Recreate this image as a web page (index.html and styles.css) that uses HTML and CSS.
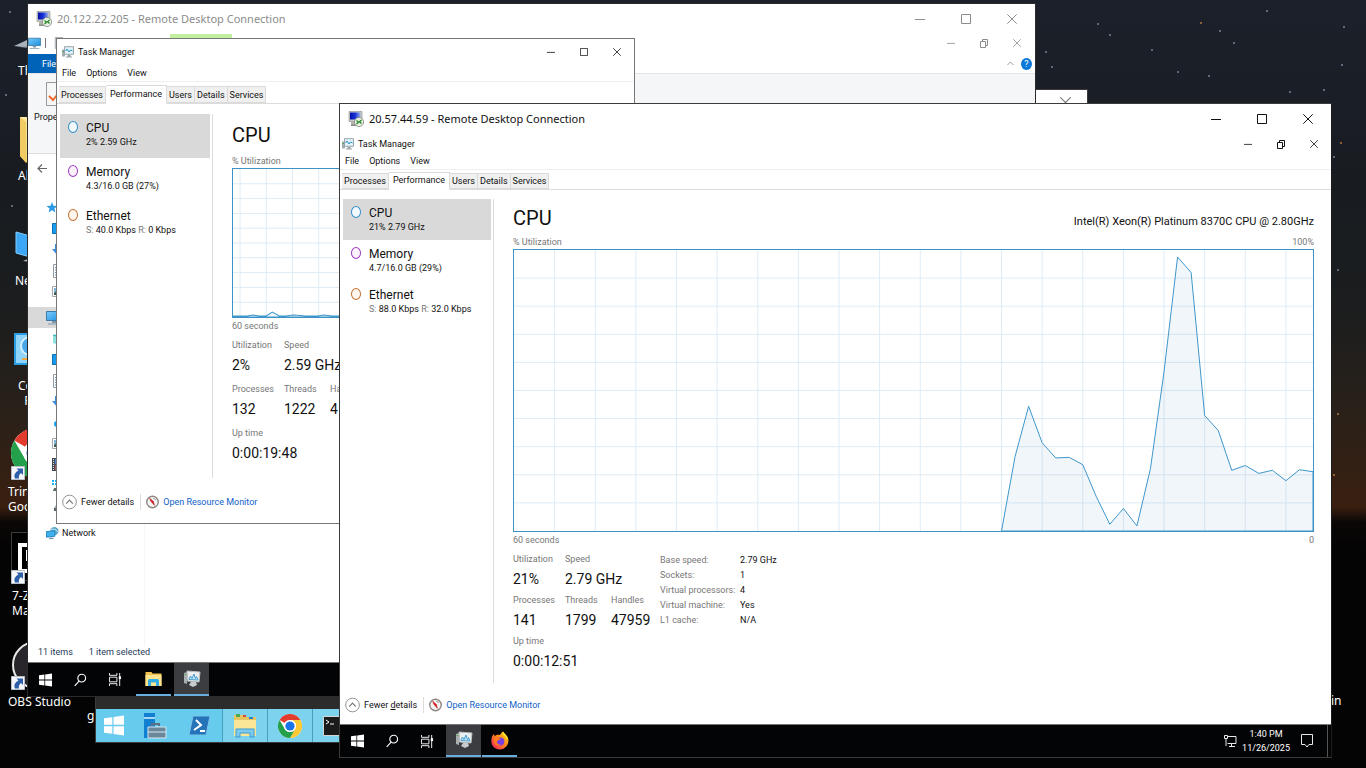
FILE: index.html
```html
<!DOCTYPE html>
<html lang="en">
<head>
  <meta charset="UTF-8">
  <meta name="viewport" content="width=device-width, initial-scale=1.0">
  <title>Remote Desktop</title>
  <link rel="stylesheet" href="styles.css">
</head>
<body>
  <!-- shared icons -->
  <svg class="sprite" aria-hidden="true">
    <defs>
      <linearGradient id="g-blue" x1="0" y1="0" x2="1" y2="1"><stop offset="0" stop-color="#7cc9fb"/><stop offset="1" stop-color="#178fe0"/></linearGradient>
      <linearGradient id="g-folder" x1="0" y1="0" x2="0" y2="1"><stop offset="0" stop-color="#ffeaa3"/><stop offset="1" stop-color="#f5d36b"/></linearGradient>
      <linearGradient id="g-fox" x1="1" y1="0" x2="0" y2="1"><stop offset="0" stop-color="#ffe226"/><stop offset=".45" stop-color="#ff8a16"/><stop offset="1" stop-color="#f5156c"/></linearGradient>
      <linearGradient id="g-screen" x1="0" y1="0" x2="1" y2="0"><stop offset="0" stop-color="#0510a8"/><stop offset=".5" stop-color="#1732d8"/><stop offset="1" stop-color="#9db4e8"/></linearGradient>
    </defs>
    <symbol id="i-min" viewBox="0 0 10 10"><path d="M0 5.5h10" stroke="currentColor" fill="none"/></symbol>
    <symbol id="i-max" viewBox="0 0 10 10"><path d="M.5.5h9v9h-9z" stroke="currentColor" fill="none"/></symbol>
    <symbol id="i-restore" viewBox="0 0 10 10"><path d="M1.500 3.500h5v6h-5zM3.500 3V1.500h5v6H7" stroke="currentColor" fill="none"/></symbol>
    <symbol id="i-close" viewBox="0 0 10 10"><path d="M.3.3l9.400 9.400M9.700.3L.3 9.700" stroke="currentColor" fill="none"/></symbol>
    <symbol id="i-rdp" viewBox="0 0 16 16">
      <path d="M1 .5h13v10H1z" fill="#c9c9c4" stroke="#8c8c88" stroke-width=".6"/>
      <path d="M2 1.500h10.500v7H2z" fill="url(#g-screen)"/>
      <path d="M3 11h8l1 3H3z" fill="#b5b5b0"/><path d="M3 13.500h9v1.500H3z" fill="#8d8d88"/>
      <circle cx="11" cy="11" r="4.600" fill="#e9efe5" stroke="#7f8a7c" stroke-width=".8"/>
      <path d="M8.500 9.500l2 1.700-2 1.800M13.500 9l-2 1.700 2 1.800" fill="none" stroke="#22861f" stroke-width="1.200"/>
    </symbol>
    <symbol id="i-tm" viewBox="0 0 12 12">
      <path d="M0 3.500h3v7H0z" fill="#a3adb0"/><path d="M.5 5h1.500v1H.5z" fill="#42a34a"/>
      <path d="M2.500.7h9v7.600h-9z" fill="#e2f3fb" stroke="#9aa3a8"/>
      <path d="M3.500 5l1.500-2 2 3 1.500-2 2 1" fill="none" stroke="#2b8fc6"/>
      <path d="M5.500 9h3v1.500H10v1H4v-1h1.500z" fill="#9aa3a8"/>
    </symbol>
    <symbol id="i-tm-big" viewBox="0 0 18 18">
      <path d="M1 3l3-1v12l-3-1z" fill="#a9aeb0"/><path d="M1.500 4.500h2" stroke="#4cab50"/>
      <path d="M4 1l13 1-1 10-11.500-1z" fill="#eceeee" stroke="#b9bdbe"/>
      <path d="M6 9l1.500-3L9 8.500 11 4l1.500 4.500 1-2L15 10l-9-.5z" fill="#bfe2f4" stroke="#4a9fd0"/>
      <path d="M8 12h5l1 3-4 2-4-2z" fill="#c9cccd"/>
    </symbol>
    <symbol id="i-win" viewBox="0 0 12 12"><path d="M0 1.700l5-.7v4.600H0zM5.700.9L12 0v5.600H5.700zM0 6.400h5V11l-5-.7zM5.700 6.400H12V12l-6.300-.9z" fill="currentColor"/></symbol>
    <symbol id="i-search" viewBox="0 0 14 14"><circle cx="8.300" cy="5" r="4.200" fill="none" stroke="currentColor" stroke-width="1.200"/><path d="M5.500 8.200L.8 13.300" stroke="currentColor" stroke-width="1.200"/></symbol>
    <symbol id="i-task" viewBox="0 0 14 14"><path d="M.5 0v2.500h8V0M.5 14v-2.500h8V14M.5 4.500h8v5h-8zM11.500 0v14" fill="none" stroke="currentColor"/><path d="M10.500 3.500h2.500v3h-2.500z" fill="currentColor"/></symbol>
    <symbol id="i-folder" viewBox="0 0 16 16"><path d="M0 1h6l1 1.500h9V15H0z" fill="#f0c24f"/><path d="M0 4h16v11H0z" fill="#ffe48d"/><path d="M2.500 15V9.500q0-1.500 1.500-1.500h8q1.500 0 1.500 1.500V15h-3v-3.500h-5V15z" fill="#35aee6"/></symbol>
    <symbol id="i-chrome" viewBox="0 0 24 24">
      <circle cx="12" cy="12" r="12" fill="#fff"/>
      <path d="M1.600 6A12 12 0 0 1 22.400 6H12a6 6 0 0 0-5.200 3z" fill="#e33b2e"/>
      <path d="M22.400 6A12 12 0 0 1 12 24l5.200-9A6 6 0 0 0 12 6z" fill="#fcc934"/>
      <path d="M12 24A12 12 0 0 1 1.600 6l5.200 9a6 6 0 0 0 10.400 0z" fill="#25a04a"/>
      <circle cx="12" cy="12" r="6" fill="#fff"/><circle cx="12" cy="12" r="4.600" fill="#1a73e8"/>
    </symbol>
    <symbol id="i-firefox" viewBox="0 0 18 18">
      <path d="M12 0c1 2 4.500 4 5.300 8 .8 5-3 10-8.300 10S.2 14 .3 9C.4 6 1.500 3.500 3 2.500c0 1 .5 1.700 1 2C5 3.500 7 3 8.500 3.500 9.500 3.500 10 1 12 0z" fill="url(#g-fox)"/>
      <circle cx="9.300" cy="10" r="4" fill="#7a3fe0"/>
      <path d="M3 7c2-1.500 4 0 6.500 0-.5 1.800-3 1.500-3.500 3-.5 2 1.500 3.500 4 3-4 3-8-1-7-6z" fill="#ff7a1c"/>
      <path d="M12 0c1 2 4.500 4 5.300 8-1 0-2-1-3-3-1.500-.5-3.500-2.500-2.300-5z" fill="#ffe62e"/>
    </symbol>
    <symbol id="i-up" viewBox="0 0 16 16"><circle cx="8" cy="8" r="7.300" fill="#fff" stroke="#8d8d8d"/><path d="M4.500 9.700L8 6l3.500 3.700" fill="none" stroke="#777" stroke-width="1.200"/></symbol>
    <symbol id="i-gauge" viewBox="0 0 14 14"><circle cx="7" cy="7" r="6.200" fill="#f4f4f4" stroke="#8f8781" stroke-width="1.500"/><path d="M4 3l1 3 4 4.500-1-4z" fill="#d91c1c" stroke="#c41717" stroke-width=".6"/><path d="M8 3l2.500 1.500" stroke="#888"/></symbol>
    <symbol id="i-shortcut" viewBox="0 0 14 14"><path d="M.5.5h13v13H.5z" fill="#f4f6f9" stroke="#b9c0ca"/><path d="M5.500 2.500H12V9l-2-2c-2 1.500-2.500 3-2 5.500H4C2.500 9 4 6.500 7.500 4.500z" fill="#2c5fa8"/></symbol>
    <symbol id="i-pc" viewBox="0 0 16 14"><path d="M.5.5h15v9H.5z" fill="url(#g-blue)" stroke="#3b7ba8"/><path d="M6 10h4v2H6zM2 12.500h12v1H2z" fill="#7d98ab"/></symbol>
    <symbol id="i-star" viewBox="0 0 12 12"><path d="M6 0l1.600 4L12 4.300 8.700 7l1 4.500L6 9 2.300 11.500l1-4.500L0 4.300 4.400 4z" fill="#2f9be6"/></symbol>
    <symbol id="i-desk" viewBox="0 0 14 12"><path d="M.5.5h13v10H.5z" fill="#159bf0" stroke="#0c6fb5"/></symbol>
    <symbol id="i-down" viewBox="0 0 12 12"><path d="M3 0h6v5h3l-6 7-6-7h3z" fill="#3c8cd9"/></symbol>
    <symbol id="i-doc" viewBox="0 0 12 14"><path d="M1.500.5h9v13h-9z" fill="#fff" stroke="#929ba3"/><path d="M3 3.500h6M3 6h6M3 8.500h6M3 11h6" stroke="#6b8eae"/></symbol>
    <symbol id="i-pic" viewBox="0 0 14 12"><path d="M.5.5h13v10H.5z" fill="#fff" stroke="#a3a9ad"/><path d="M2 2h10v7H2z" fill="#7fb9e2"/><path d="M2 7l4-3 6 4v1H2z" fill="#3f5b4d"/></symbol>
    <symbol id="i-cyl" viewBox="0 0 14 12"><path d="M1 2l6-2 6 2v8l-6 2-6-2z" fill="#8ee3e0"/><path d="M1 2l6 2 6-2" fill="none" stroke="#32b3b5"/></symbol>
    <symbol id="i-music" viewBox="0 0 12 12"><circle cx="5" cy="7" r="3" fill="#15a3f5"/></symbol>
    <symbol id="i-film" viewBox="0 0 12 13"><path d="M0 0h12v13H0z" fill="#434a55"/><path d="M3 1h6v5H3z" fill="#4f83c9"/><path d="M3 7h6v5H3z" fill="#a65b5b"/><path d="M1.500 1v11M10.500 1v11" stroke="#ddd" stroke-dasharray="1 1"/></symbol>
    <symbol id="i-cdrive" viewBox="0 0 14 12"><path d="M0 0h2v2H0zM3 0h2v2H3zM0 3h2v2H0zM3 3h2v2H3z" fill="#17b4f2"/><path d="M2 8h12v3H1z" fill="#5d666b"/></symbol>
    <symbol id="i-drive" viewBox="0 0 14 12"><path d="M4 4h9l1 3v3H2V7z" fill="#aab0b3"/><path d="M2 7h12v3H2z" fill="#5d666b"/></symbol>
    <symbol id="i-net" viewBox="0 0 14 14"><circle cx="9" cy="5" r="4.500" fill="#5da9c9"/><path d="M5 4q4-3 8 2" stroke="#d7f2ff" fill="none"/><path d="M.5 5.500l9-1v6l-9 1z" fill="#3fb1ef" stroke="#2383be"/><path d="M4 12h4v1.500H3z" fill="#6b90a6"/></symbol>
  </svg>

  <main class="desktop">
    <svg class="stars" width="100%" height="100%" aria-hidden="true">
      <g fill="#77809a"><circle cx="1046" cy="52" r="1"/><circle cx="1098" cy="24" r="1"/><circle cx="1110" cy="35" r="1"/><circle cx="1220" cy="31" r="1"/><circle cx="1234" cy="43" r="1"/><circle cx="1344" cy="27" r="1"/><circle cx="1267" cy="11" r="1"/><circle cx="1178" cy="72" r="1"/><circle cx="1209" cy="76" r="1"/><circle cx="1290" cy="92" r="1"/><circle cx="1324" cy="90" r="1"/><circle cx="1342" cy="65" r="1"/><circle cx="1334" cy="157" r="1"/><circle cx="1152" cy="50" r="1"/><circle cx="1052" cy="67" r="1"/><circle cx="1338" cy="270" r="1"/><circle cx="10" cy="12" r="1"/><circle cx="12" cy="206" r="1"/><circle cx="6" cy="95" r="1"/></g>
      <g fill="#b9793f"><circle cx="1201" cy="23" r="1"/><circle cx="1341" cy="143" r="1"/><circle cx="1338" cy="414" r="1"/><circle cx="1334" cy="475" r="1"/></g>
    </svg>

    <a class="shortcut s-pc" href="#"><svg width="32" height="24" viewBox="0 0 32 24"><path d="M0 11L24 0v14z" fill="#aab3bb"/><path d="M5 12l19-1v3z" fill="#6f7a84"/></svg><span>Th</span></a>
    <a class="shortcut s-al" href="#"><svg width="32" height="48" viewBox="0 0 32 48"><path d="M2 1h30v46H9L2 40z" fill="url(#g-folder)"/><path d="M2 1l6 5v41l-6-7z" fill="#f0cb62"/></svg><span>Al</span></a>
    <a class="shortcut s-ne" href="#"><svg width="32" height="40" viewBox="0 0 32 40"><circle cx="22" cy="14" r="13" fill="#4a8fb5"/><path d="M1 3l28 8v21L1 24z" fill="#3da6f5" stroke="#7fd0ff"/><path d="M8 32l10-4v5z" fill="#c5ccd2"/></svg><span>Ne</span></a>
    <a class="shortcut s-co" href="#"><svg width="34" height="32" viewBox="0 0 34 32"><path d="M1 1h33v30H1z" fill="#8fd4fa" stroke="#2c9ce0" stroke-width="2"/><circle cx="16" cy="13" r="9" fill="#4aa8e8" stroke="#d6f1ff" stroke-width="2"/><path d="M8 26h12" stroke="#f5a93b" stroke-width="2"/></svg><span>Co<br>&nbsp; P</span></a>
    <a class="shortcut s-tr" href="#"><svg width="48" height="52" viewBox="0 0 48 52"><use href="#i-chrome" x="3" width="50" height="50"/><use href="#i-shortcut" y="38" x="3" width="14" height="14"/></svg><span>Trin<br>Goo</span></a>
    <a class="shortcut s-7z" href="#"><svg width="48" height="52" viewBox="0 0 48 52"><path d="M3.500.5h44v48h-44z" fill="#000" stroke="#3d3d3d"/><path d="M10 11h38v4H14v22h34v4H10z" fill="#fff"/><path d="M18 18h12v4h-7v7h-5z" fill="#fff"/><use href="#i-shortcut" y="38" x="3" width="14" height="14"/></svg><span>7-Z<br>Ma</span></a>
    <a class="shortcut s-obs" href="#"><svg width="48" height="50" viewBox="0 0 48 50"><circle cx="28" cy="25" r="23" fill="#28262a" stroke="#e8e8e8" stroke-width="2"/><path d="M24 8q-8 8 0 15l10-6z" fill="#d9d9d9"/><use href="#i-shortcut" y="36" x="3" width="14" height="14"/></svg><span>OBS Studio</span></a>
    <a class="shortcut s-g" href="#"><span>g</span></a>
    <a class="shortcut s-in" href="#"><span>in</span></a>

    <!-- third session, mostly covered -->
    <section class="window rdp rdp-third">
      <header class="third-title"><button type="button" aria-label="Close"><svg width="11" height="11"><use href="#i-close"/></svg></button></header>
      <div class="third-body"></div>
      <nav class="bar-blue">
        <button type="button" aria-label="Start"><svg width="20" height="21"><use href="#i-win"/></svg></button>
        <button type="button" aria-label="Server Manager"><svg width="24" height="26" viewBox="0 0 24 26"><path d="M1 0h11v25H1z" fill="#1180d0"/><path d="M1 5h11" stroke="#d9f2ff" stroke-width="1.500"/><path d="M9 13v-2h7v2" stroke="#5b7183" stroke-width="2" fill="none"/><path d="M5 14h18v11H5z" fill="#6d879a" stroke="#d8e8f2"/><path d="M5 19h18" stroke="#d8e8f2"/></svg></button>
        <button type="button" aria-label="PowerShell"><svg width="21" height="19" viewBox="0 0 21 19"><path d="M4 0h17l-4 19H0z" fill="#2573b8" stroke="#7fc0ea"/><path d="M7 4l5 5-7 5M11 15h5" stroke="#fff" stroke-width="2" fill="none"/></svg></button>
        <button type="button" class="open" aria-label="Explorer"><svg width="24" height="25" viewBox="0 0 24 25"><path d="M1 2h9l2 2h11v19H1z" fill="#e7c462"/><path d="M1 7h22v16H1z" fill="#fbe597"/><path d="M3 1h4v3H3z" fill="#4aa84e"/><path d="M10 2h3v2h-3z" fill="#d9483b"/><path d="M16 4h4v2h-4z" fill="#2c7fd0"/><path d="M3 24v-8h18v8h-4v-4H7v4z" fill="#7ccbee" stroke="#3a9bd0"/></svg></button>
        <button type="button" class="open" aria-label="Chrome"><svg width="24" height="24"><use href="#i-chrome"/></svg></button>
        <button type="button" class="open" aria-label="Command Prompt"><svg width="24" height="20" viewBox="0 0 24 20"><path d="M.5.5h23v19H.5z" fill="#1b1b1b" stroke="#d5d5d5"/><path d="M3 4l3 2-3 2M7 8h4" stroke="#fff" fill="none"/></svg></button>
      </nav>
    </section>

    <!-- session on 20.122.22.205 -->
    <section class="window rdp rdp-back">
      <header class="rdp-title">
        <svg width="16" height="16"><use href="#i-rdp"/></svg>
        <h1>20.122.22.205 - Remote Desktop Connection</h1>
        <div class="controls">
          <button type="button" aria-label="Minimize"><svg width="10" height="10"><use href="#i-min"/></svg></button>
          <button type="button" aria-label="Maximize"><svg width="10" height="10"><use href="#i-max"/></svg></button>
          <button type="button" aria-label="Close"><svg width="10" height="10"><use href="#i-close"/></svg></button>
        </div>
      </header>
      <div class="session">
        <div class="explorer">
          <div class="ex-title">
            <svg width="13" height="13"><use href="#i-pc"/></svg>
            <i class="bar"></i>
            <svg width="10" height="12"><use href="#i-doc"/></svg>
            <div class="ex-tool"></div>
            <div class="controls small">
              <button type="button" aria-label="Minimize"><svg width="8" height="8"><use href="#i-min"/></svg></button>
              <button type="button" aria-label="Restore"><svg width="10" height="10"><use href="#i-restore"/></svg></button>
              <button type="button" aria-label="Close"><svg width="8" height="8"><use href="#i-close"/></svg></button>
            </div>
          </div>
          <div class="ex-tabs">
            <button type="button" class="ex-file">File</button>
            <svg width="7" height="7" viewBox="0 0 7 7"><path d="M.5 5l3-3 3 3" fill="none" stroke="#999"/></svg>
            <button type="button" class="ex-help">?</button>
          </div>
          <div class="ex-ribbon">
            <button type="button"><svg width="26" height="24" viewBox="0 0 26 24"><path d="M.5.5h25v23H.5z" fill="#f7f7f7" stroke="#999"/><path d="M3 14l4 4 8-10" fill="none" stroke="#f2682a" stroke-width="2"/></svg>Prope</button>
          </div>
          <div class="ex-nav"><svg width="10" height="9" viewBox="0 0 10 9"><path d="M10 4.500H1M5 .5l-4 4 4 4" fill="none" stroke="#666" stroke-width="1.200"/></svg></div>
          <div class="ex-body">
            <ul class="ex-tree">
              <li><svg width="12" height="11"><use href="#i-star"/></svg></li>
              <li class="sub"><svg width="14" height="12"><use href="#i-desk"/></svg></li>
              <li class="sub"><svg width="12" height="12"><use href="#i-down"/></svg></li>
              <li class="sub"><svg width="12" height="14"><use href="#i-doc"/></svg></li>
              <li class="sub"><svg width="14" height="12"><use href="#i-pic"/></svg></li>
              <li class="group current"><svg width="16" height="14"><use href="#i-pc"/></svg></li>
              <li class="sub"><svg width="14" height="12"><use href="#i-cyl"/></svg></li>
              <li class="sub"><svg width="14" height="12"><use href="#i-desk"/></svg></li>
              <li class="sub"><svg width="12" height="14"><use href="#i-doc"/></svg></li>
              <li class="sub"><svg width="12" height="12"><use href="#i-down"/></svg></li>
              <li class="sub"><svg width="12" height="12"><use href="#i-music"/></svg></li>
              <li class="sub"><svg width="14" height="12"><use href="#i-pic"/></svg></li>
              <li class="sub"><svg width="12" height="13"><use href="#i-film"/></svg></li>
              <li class="sub"><svg width="14" height="12"><use href="#i-cdrive"/></svg></li>
              <li class="sub"><svg width="14" height="12"><use href="#i-drive"/></svg></li>
              <li class="group"><svg width="13" height="14"><use href="#i-net"/></svg>Network</li>
            </ul>
          </div>
          <div class="ex-status"><span>11 items</span><span>1 item selected</span></div>
        </div>

        <div class="window tm tm-back">
          <header class="tm-title">
            <svg width="12" height="12"><use href="#i-tm"/></svg>
            <h2>Task Manager</h2>
            <div class="controls small">
              <button type="button" aria-label="Minimize"><svg width="8" height="8"><use href="#i-min"/></svg></button>
              <button type="button" aria-label="Maximize"><svg width="8" height="8"><use href="#i-max"/></svg></button>
              <button type="button" aria-label="Close"><svg width="8" height="8"><use href="#i-close"/></svg></button>
            </div>
          </header>
          <nav class="tm-menu"><button type="button">File</button><button type="button">Options</button><button type="button">View</button></nav>
          <nav class="tm-tabs"><button type="button">Processes</button><button type="button" class="active">Performance</button><button type="button">Users</button><button type="button">Details</button><button type="button">Services</button></nav>
          <div class="tm-body">
            <ul class="tm-side">
              <li class="cpu current"><i></i><div><b>CPU</b><p>2% 2.59 GHz</p></div></li>
              <li class="mem"><i></i><div><b>Memory</b><p>4.3/16.0 GB (27%)</p></div></li>
              <li class="eth"><i></i><div><b>Ethernet</b><p><em>S:</em> 40.0 Kbps <em>R:</em> 0 Kbps</p></div></li>
            </ul>
            <div class="tm-main">
              <div class="tm-head"><h3>CPU</h3></div>
              <div class="axis"><span>% Utilization</span></div>
              <svg class="graph" viewBox="0 0 380 150" preserveAspectRatio="none">
                <path class="grid" d="M7 0v150M33 0v150M59 0v150M85 0v150M111 0v150M137 0v150M163 0v150M189 0v150M0 15h380M0 30h380M0 45h380M0 60h380M0 75h380M0 90h380M0 105h380M0 120h380M0 135h380"/>
                <path class="line" d="M0 149H14L20 148L26 149H33L39 145L46 149H52L60 148L72 149H84L90 148L98 149H380V150H0z"/>
              </svg>
              <div class="axis below"><span>60 seconds</span></div>
              <div class="stats">
                <dl class="counters">
                  <div><dt>Utilization</dt><dd>2%</dd></div>
                  <div class="wide"><dt>Speed</dt><dd>2.59 GHz</dd></div>
                  <div><dt>Processes</dt><dd>132</dd></div>
                  <div><dt>Threads</dt><dd>1222</dd></div>
                  <div><dt>Handles</dt><dd>4</dd></div>
                  <div class="full"><dt>Up time</dt><dd>0:00:19:48</dd></div>
                </dl>
              </div>
            </div>
          </div>
          <footer class="tm-foot">
            <button type="button"><svg width="15" height="16"><use href="#i-up"/></svg>Fewer details</button>
            <a href="#"><svg width="13" height="14"><use href="#i-gauge"/></svg>Open Resource Monitor</a>
          </footer>
        </div>
      </div>
      <nav class="taskbar">
        <button type="button" aria-label="Start"><svg width="13" height="14"><use href="#i-win"/></svg></button>
        <button type="button" aria-label="Search"><svg width="13" height="14"><use href="#i-search"/></svg></button>
        <button type="button" aria-label="Task View"><svg width="13" height="13"><use href="#i-task"/></svg></button>
        <button type="button" class="running" aria-label="Explorer"><svg width="17" height="16"><use href="#i-folder"/></svg></button>
        <button type="button" class="running focused" aria-label="Task Manager"><svg width="18" height="18"><use href="#i-tm-big"/></svg></button>
      </nav>
    </section>

    <!-- session on 20.57.44.59 -->
    <section class="window rdp rdp-front">
      <header class="rdp-title">
        <svg width="16" height="16"><use href="#i-rdp"/></svg>
        <h1>20.57.44.59 - Remote Desktop Connection</h1>
        <div class="controls">
          <button type="button" aria-label="Minimize"><svg width="10" height="10"><use href="#i-min"/></svg></button>
          <button type="button" aria-label="Maximize"><svg width="10" height="10"><use href="#i-max"/></svg></button>
          <button type="button" aria-label="Close"><svg width="10" height="10"><use href="#i-close"/></svg></button>
        </div>
      </header>
      <div class="tm">
        <header class="tm-title">
          <svg width="12" height="12"><use href="#i-tm"/></svg>
          <h2>Task Manager</h2>
          <div class="controls small">
            <button type="button" aria-label="Minimize"><svg width="8" height="8"><use href="#i-min"/></svg></button>
            <button type="button" aria-label="Restore"><svg width="10" height="10"><use href="#i-restore"/></svg></button>
            <button type="button" aria-label="Close"><svg width="8" height="8"><use href="#i-close"/></svg></button>
          </div>
        </header>
        <nav class="tm-menu"><button type="button">File</button><button type="button">Options</button><button type="button">View</button></nav>
        <nav class="tm-tabs"><button type="button">Processes</button><button type="button" class="active">Performance</button><button type="button">Users</button><button type="button">Details</button><button type="button">Services</button></nav>
        <div class="tm-body">
          <ul class="tm-side">
            <li class="cpu current"><i></i><div><b>CPU</b><p>21% 2.79 GHz</p></div></li>
            <li class="mem"><i></i><div><b>Memory</b><p>4.7/16.0 GB (29%)</p></div></li>
            <li class="eth"><i></i><div><b>Ethernet</b><p><em>S:</em> 88.0 Kbps <em>R:</em> 32.0 Kbps</p></div></li>
          </ul>
          <div class="tm-main">
            <div class="tm-head"><h3>CPU</h3><span>Intel(R) Xeon(R) Platinum 8370C CPU @ 2.80GHz</span></div>
            <div class="axis"><span>% Utilization</span><span>100%</span></div>
            <!-- one unit across is one second, one unit down is one percent -->
            <svg class="graph" viewBox="0 0 59 100" preserveAspectRatio="none">
              <path class="grid" d="M3 0v100M6 0v100M9 0v100M12 0v100M15 0v100M18 0v100M21 0v100M24 0v100M27 0v100M30 0v100M33 0v100M36 0v100M39 0v100M42 0v100M45 0v100M48 0v100M51 0v100M54 0v100M57 0v100M0 10h59M0 20h59M0 30h59M0 40h59M0 50h59M0 60h59M0 70h59M0 80h59M0 90h59"/>
              <path class="line" d="M36 100L37 73.500L38 55.600L39 68.600L40 74L41 73.800L42 76.400L43 87.800L44 97.600L45 92L46 98.200L47 77.700L48 43.300L49 2.500L50 8L51 58.900L52 64.200L53 78.400L54 76.700L55 79.500L56 78.400L57 82.100L58 78.200L59 78.900V100z"/>
            </svg>
            <div class="axis below"><span>60 seconds</span><span>0</span></div>
            <div class="stats">
              <dl class="counters">
                <div><dt>Utilization</dt><dd>21%</dd></div>
                <div class="wide"><dt>Speed</dt><dd>2.79 GHz</dd></div>
                <div><dt>Processes</dt><dd>141</dd></div>
                <div><dt>Threads</dt><dd>1799</dd></div>
                <div><dt>Handles</dt><dd>47959</dd></div>
                <div class="full"><dt>Up time</dt><dd>0:00:12:51</dd></div>
              </dl>
              <table>
                <tr><th scope="row">Base speed:</th><td>2.79 GHz</td></tr>
                <tr><th scope="row">Sockets:</th><td>1</td></tr>
                <tr><th scope="row">Virtual processors:</th><td>4</td></tr>
                <tr><th scope="row">Virtual machine:</th><td>Yes</td></tr>
                <tr><th scope="row">L1 cache:</th><td>N/A</td></tr>
              </table>
            </div>
          </div>
        </div>
        <footer class="tm-foot">
          <button type="button"><svg width="15" height="16"><use href="#i-up"/></svg><span>Fewer <u>d</u>etails</span></button>
          <a href="#"><svg width="13" height="14"><use href="#i-gauge"/></svg>Open Resource Monitor</a>
        </footer>
      </div>
      <nav class="taskbar">
        <button type="button" aria-label="Start"><svg width="13" height="14"><use href="#i-win"/></svg></button>
        <button type="button" aria-label="Search"><svg width="13" height="14"><use href="#i-search"/></svg></button>
        <button type="button" aria-label="Task View"><svg width="13" height="13"><use href="#i-task"/></svg></button>
        <button type="button" class="running focused" aria-label="Task Manager"><svg width="18" height="18"><use href="#i-tm-big"/></svg></button>
        <button type="button" class="running" aria-label="Firefox"><svg width="18" height="19"><use href="#i-firefox"/></svg></button>
        <div class="tray">
          <svg width="13" height="12" viewBox="0 0 13 12"><path d="M3.500 1.500h8.500v7H3.500M7.500 9v2M5 11.500h6M.5.500h3v3h-3zM2 4v7" fill="none" stroke="#e8e8e8"/></svg>
          <time>1:40 PM<br>11/26/2025</time>
          <svg width="12" height="14" viewBox="0 0 12 14"><path d="M.5.500h11v10H8l-2 2.500-2-2.500H.5z" fill="none" stroke="#e8e8e8"/></svg>
        </div>
      </nav>
    </section>
  </main>
</body>
</html>
```
FILE: styles.css
```css
* {
  box-sizing: border-box;
}

body {
  margin: 0;
  font-family: Roboto, "Liberation Sans", sans-serif;
  font-size: 9px;
  line-height: 12px;
  color: #111;
}

h1, h2, h3, p, ul, dl, dd {
  margin: 0;
  padding: 0;
  font-weight: normal;
  list-style: none;
}

button {
  border: 0;
  padding: 0;
  background: none;
  font: inherit;
  color: inherit;
}

a {
  color: inherit;
  text-decoration: none;
}

svg {
  display: block;
  flex: none;
}

.sprite {
  position: absolute;
  width: 0;
  height: 0;
}

/* Desktop */
.desktop {
  position: relative;
  height: 100vh;
  overflow: hidden;
  background: linear-gradient(#1c202a 0, #181c21 25%, #1b1d1e 40%, #2a2119 54%, #3a1f10 66%, #0a0706 68%, #040404 72%);
}

.stars {
  position: absolute;
  inset: 0;
}

.shortcut {
  position: absolute;
  display: flex;
  flex-direction: column;
  gap: 4px;
  font-family: "Noto Sans", sans-serif;
  font-size: 12px;
  line-height: 15px;
  color: #fff;
  white-space: nowrap;
}

.s-pc { left: 14px; top: 35px; }
.s-al { left: 18px; top: 116px; }
.s-ne { left: 15px; top: 229px; }
.s-co { left: 14px; top: 333px; gap: 13px; }
.s-tr { left: 8px; top: 428px; }
.s-7z { left: 8px; top: 532px; }
.s-obs { left: 8px; top: 640px; }
.s-g { left: 87px; top: 708px; }
.s-in { left: 1331px; top: 693px; }

.s-pc span,
.s-co span,
.s-7z span {
  padding-left: 4px;
}

/* Windows */
.window {
  position: absolute;
  display: flex;
  flex-direction: column;
  background: #fff;
}

.rdp-third {
  inset: 89px 278px 25px 95px;
  border: 1px solid #3a3a3a;
}

.rdp-back {
  inset: 3px 330px 71px 27px;
  border: 1px solid #2b2b2b;
}

.rdp-front {
  inset: 103px 34px 10px 339px;
  border: 1px solid #3b3b3b;
  border-right-color: #1d1d1d;
}

.rdp-title {
  display: flex;
  align-items: center;
  height: 30px;
  padding: 0 0 1px 8px;
  gap: 5px;
}

.rdp-front .rdp-title {
  height: 31px;
}

.rdp-title h1 {
  flex: 1;
  font-family: "Noto Sans", sans-serif;
  font-size: 11px;
}

.rdp-back .rdp-title,
.rdp-back .ex-title {
  color: #8c8c8c;
}

.controls {
  display: flex;
}

.controls button {
  display: grid;
  place-items: center;
  width: 46px;
  height: 28px;
}

.controls.small button {
  width: 33px;
  height: 18px;
}

.third-title {
  display: flex;
  justify-content: flex-end;
  height: 30px;
  padding: 7px 16px 0 0;
  color: #777;
}

.third-title button {
  height: 11px;
}

.third-body {
  flex: 1;
  background: #2c2c2c;
}

.bar-blue {
  display: flex;
  height: 33px;
  background: #66cbed;
  color: #fff;
}

.bar-blue button {
  display: grid;
  place-items: center;
  width: 45px;
}

.bar-blue button:first-child {
  width: 36px;
}

.bar-blue .open {
  background: #7dd3ee;
  border-left: 1px solid #459fbe;
}

/* Explorer */
.session {
  position: relative;
  display: flex;
  flex: 1;
}

.explorer {
  flex: 1;
  display: flex;
  flex-direction: column;
}

.ex-title {
  display: flex;
  align-items: center;
  height: 20px;
  gap: 4px;
  padding-bottom: 2px;
}

.ex-title .bar {
  width: 1px;
  height: 10px;
  margin: 0 4px 0 0;
  background: #777;
}

.ex-tool {
  width: 62px;
  height: 18px;
  margin-left: 102px;
  background: #c3f0a0;
}

.ex-title .controls {
  margin-left: auto;
  padding-right: 2px;
}

.ex-tabs {
  display: flex;
  align-items: center;
  height: 20px;
  gap: 7px;
  padding-right: 3px;
  border-bottom: 1px solid #e3e4e5;
}

.ex-file {
  align-self: stretch;
  width: 42px;
  margin-right: auto;
  background: #0063b8;
  color: #fff;
}

.ex-help {
  width: 11px;
  height: 12px;
  border-radius: 50%;
  background: #0b78d7;
  color: #fff;
}

.ex-ribbon {
  height: 80px;
  padding: 8px 6px;
  background: #f5f6f7;
  border-bottom: 1px solid #dcdddf;
}

.ex-ribbon button {
  display: flex;
  flex-direction: column;
  align-items: flex-end;
  gap: 5px;
}

.ex-ribbon svg {
  margin-right: -14px;
}

.ex-nav {
  height: 43px;
  padding: 10px 9px;
}

.ex-body {
  flex: 1;
  display: flex;
}

.ex-tree {
  width: 117px;
  border-right: 1px solid #f6f6f6;
}

.ex-tree li {
  display: flex;
  align-items: center;
  height: 21px;
  padding-left: 18px;
  gap: 3px;
}

.ex-tree li.sub {
  padding-left: 24px;
}

.ex-tree li.group {
  margin-top: 5px;
}

.ex-tree .current {
  width: 60px;
  background: #d9d9d9;
}

.ex-status {
  display: flex;
  height: 16px;
  padding-left: 10px;
  gap: 16px;
  color: #1e395b;
}

/* Task Manager */
.tm {
  --row: 41px;
  --side: 151px;
  flex: 1;
  min-height: 0;
  display: flex;
  flex-direction: column;
}

.tm-back {
  --row: 44px;
  --side: 153px;
  inset: 4px 400px 138px 28px;
  border: 1px solid #777;
}

.tm-title {
  display: flex;
  align-items: center;
  height: 18px;
  padding-left: 2px;
  gap: 4px;
}

.tm-title h2 {
  flex: 1;
  font-size: 9px;
}

.tm-title .controls {
  padding-right: 1px;
}

.tm-menu {
  display: flex;
  height: 17px;
  padding-left: 5px;
  gap: 10px;
  border-bottom: 1px solid #efefef;
}

.tm-tabs {
  display: flex;
  align-items: flex-end;
  height: 20px;
  padding-left: 2px;
  border-bottom: 1px solid #dcdcdc;
}

.tm-tabs button {
  height: 16px;
  padding: 0 2px;
  background: #f0f0f0;
  border: 1px solid #dadada;
  border-left-width: 0;
}

.tm-tabs .active {
  height: 18px;
  margin-bottom: -1px;
  padding: 0 4px 2px;
  background: #fff;
  border-bottom-color: #fff;
}

.tm-body {
  flex: 1;
  min-height: 0;
  display: flex;
  padding: 9px 17px 0 3px;
}

.tm-side {
  width: var(--side);
  padding-right: 2px;
  border-right: 1px solid #dcdcdc;
}

.tm-side li {
  display: flex;
  gap: 8px;
  height: var(--row);
  padding: 7px 8px;
}

.tm-side .current {
  background: #d9d9d9;
}

.tm-side i {
  width: 10px;
  height: 12px;
  border: 1px solid #2f8fc9;
  border-radius: 50%;
  background: #f1f9fe;
}

.tm-side .mem i {
  border-color: #a03cc0;
  background: #fbf2fd;
}

.tm-side .eth i {
  border-color: #c4702f;
  background: #fef5ee;
}

.tm-side b {
  display: block;
  font-weight: normal;
  font-size: 12px;
  line-height: 14px;
}

.tm-side p {
  line-height: 14px;
}

.tm-side em {
  font-style: normal;
  color: #777;
}

.tm-main {
  flex: 1;
  min-width: 0;
  min-height: 0;
  display: flex;
  flex-direction: column;
  padding: 0 0 8px 19px;
}

.tm-head {
  display: flex;
  justify-content: space-between;
  align-items: center;
  height: 37px;
  line-height: 24px;
  font-size: 11px;
}

.tm-head h3 {
  font-size: 20px;
}

.tm-head span {
  padding-top: 9px;
}

.axis {
  display: flex;
  justify-content: space-between;
  height: 13px;
  color: #777;
}

.axis.below {
  height: 20px;
  padding-top: 2px;
}

.graph {
  flex: 1 1 0;
  width: 100%;
  height: 0;
  min-height: 0;
  border: 1px solid #3d93c6;
}

.graph path {
  vector-effect: non-scaling-stroke;
}

.grid {
  fill: none;
  stroke: #deecf6;
}

.line {
  fill: rgba(17, 96, 168, 0.06);
  stroke: #3f97cb;
}

.stats {
  display: flex;
}

.counters {
  display: grid;
  grid-template-columns: 52px 46px 49px;
  grid-auto-rows: var(--row);
}

.counters .wide {
  grid-column: span 2;
}

.counters .full {
  grid-column: span 3;
}

.stats dt,
.stats th {
  color: #777;
  font-weight: normal;
  text-align: left;
}

.stats dt {
  line-height: 15px;
}

.stats dd {
  font-size: 14px;
  line-height: 24px;
  white-space: nowrap;
}

.stats table {
  align-self: flex-start;
  border-collapse: collapse;
  white-space: nowrap;
}

.stats td,
.stats th {
  height: 15px;
  padding: 0;
}

.stats th {
  width: 80px;
}

.tm-foot {
  display: flex;
  align-items: center;
  height: 41px;
  padding: 3px 0 0 5px;
}

.tm-foot button,
.tm-foot a {
  display: flex;
  align-items: center;
  gap: 4px;
}

.tm-foot button {
  padding-right: 6px;
  border-right: 1px solid #dcdcdc;
}

.tm-foot a {
  padding-left: 5px;
  color: #0f62c8;
}

/* the windowed Task Manager has a taller caption and menu */
.tm-back .tm-title {
  height: 25px;
  padding-left: 5px;
}

.tm-back .tm-menu {
  height: 18px;
  line-height: 18px;
}

.tm-back .tm-tabs {
  height: 22px;
}

.tm-back .tm-tabs button {
  height: 17px;
}

.tm-back .tm-tabs .active {
  height: 19px;
}

.tm-back .tm-body {
  padding-top: 10px;
}

.tm-back .tm-main {
  padding-bottom: 8px;
}

.tm-back .tm-head {
  height: 41px;
}

.tm-back .tm-foot {
  height: 45px;
}

/* Taskbar */
.taskbar {
  display: flex;
  height: 34px;
  background: #030406;
  border-top: 1px solid #777;
  color: #fff;
}

.rdp-front .taskbar {
  height: 33px;
}

.taskbar button {
  display: grid;
  place-items: center;
  width: 35px;
}

.taskbar .running {
  margin-left: 1px;
  border-bottom: 2px solid #69aede;
}

.rdp-back .running {
  margin-left: 3px;
}

.taskbar .focused {
  background: #3b3d40;
}

.tray {
  display: flex;
  align-items: center;
  gap: 5px;
  margin-left: auto;
  padding-right: 14px;
  border-right: 1px solid #555;
  margin-right: 3px;
}

.tray time {
  line-height: 14px;
  text-align: center;
  margin-right: 6px;
}
```
